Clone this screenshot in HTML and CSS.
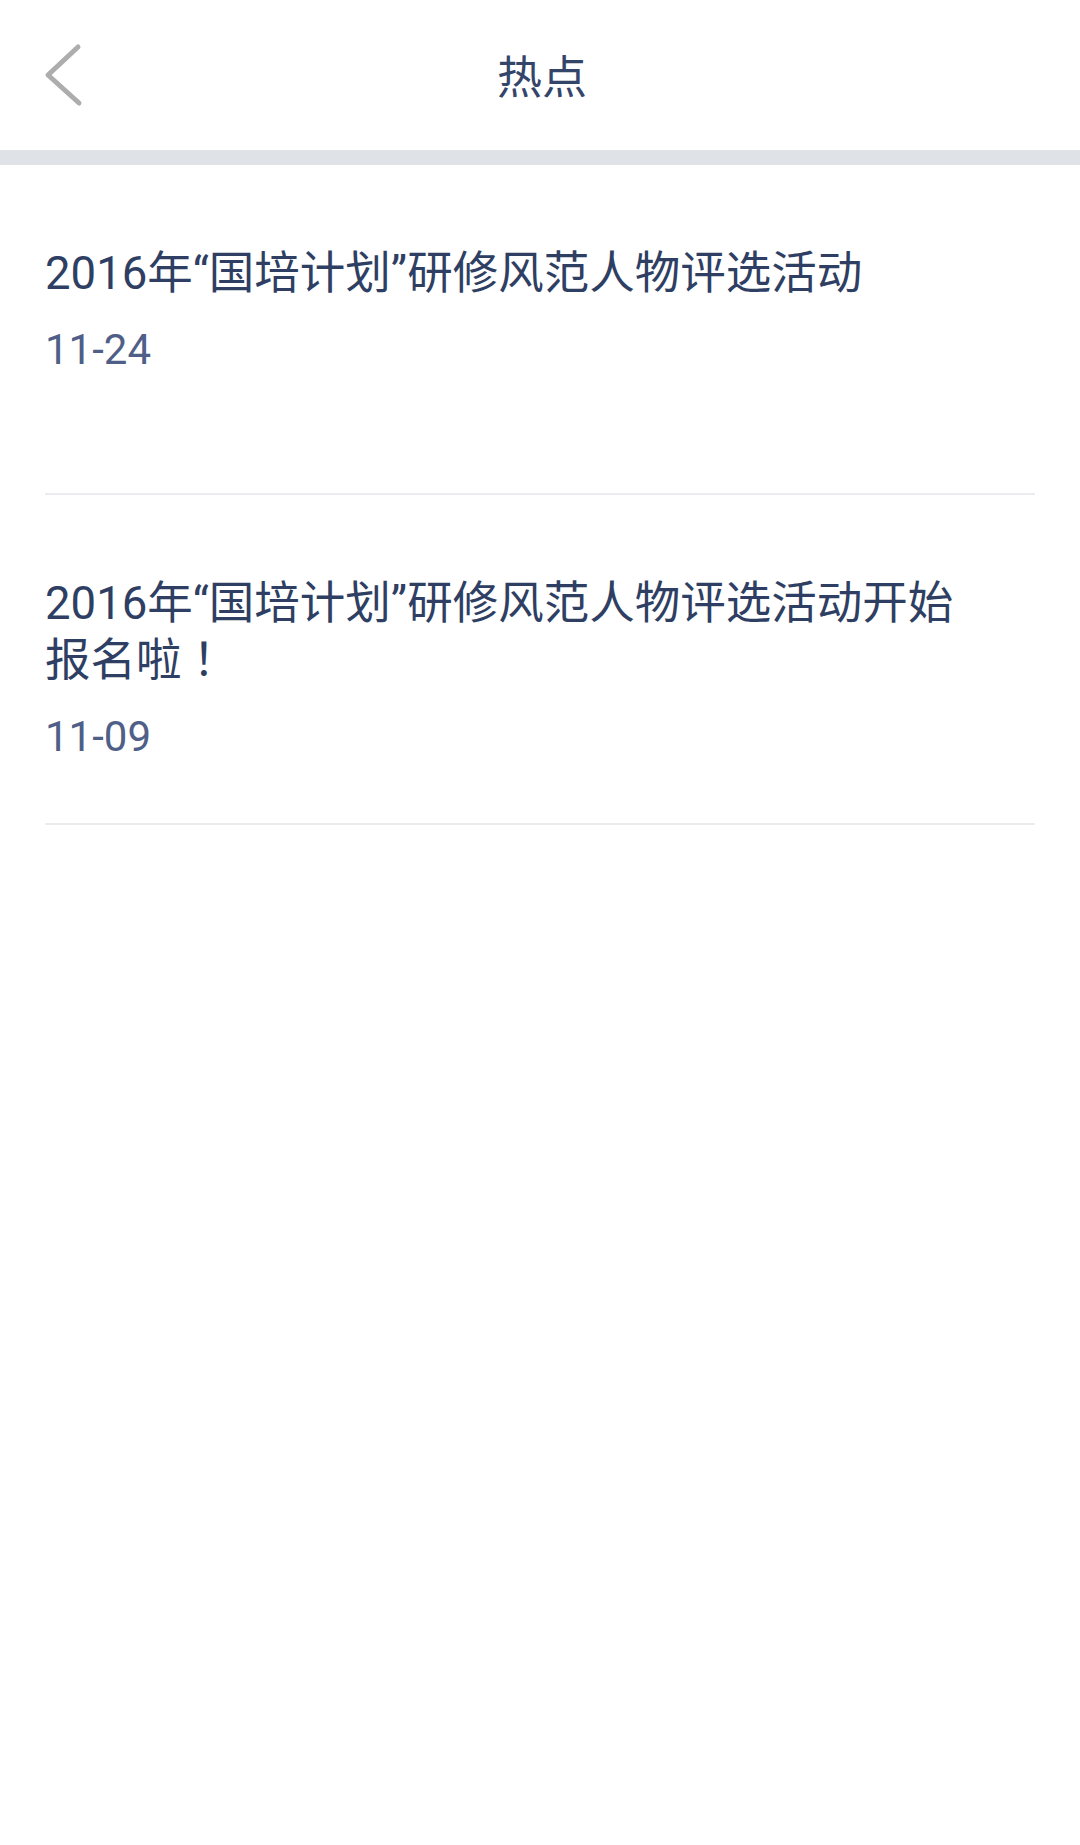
FILE: index.html
```html
<!DOCTYPE html>
<html lang="zh-CN">
<head>
<meta charset="utf-8">
<title>热点</title>
<link rel="stylesheet" href="styles.css">
</head>
<body>
<header class="topbar">
  <div class="topbar-left">
    <svg class="back-icon" width="40" height="70" viewBox="0 0 40 70" aria-hidden="true">
      <polyline points="34,7 4,35 35,63" fill="none" stroke="#adadad" stroke-width="5" stroke-linecap="round" stroke-linejoin="round"/>
    </svg>
  </div>
  <h1 class="topbar-title">热点</h1>
  <div class="topbar-right"></div>
</header>
<div class="divider-band"></div>
<ul class="news-list">
  <li class="news-item">
    <p class="news-title">2016年“国培计划”研修风范人物评选活动</p>
    <p class="news-date">11-24</p>
  </li>
  <li class="news-item">
    <p class="news-title">2016年“国培计划”研修风范人物评选活动开始报名啦<span class="cjk-punct">！</span></p>
    <p class="news-date">11-09</p>
  </li>
</ul>
</body>
</html>
```
FILE: styles.css
```css
html, body {
  margin: 0;
  padding: 0;
  background: #ffffff;
}
body {
  width: 1080px;
  min-height: 1845px;
  font-family: Roboto, "Noto Sans CJK SC", sans-serif;
}
.topbar {
  height: 150px;
  display: grid;
  grid-template-columns: 1fr auto 1fr;
  align-items: center;
  background: #ffffff;
}
.topbar-left {
  display: flex;
  align-items: center;
  padding-left: 44px;
  height: 150px;
}
.back-icon {
  display: block;
}
.topbar-title {
  margin: 0;
  padding-left: 4px;
  font-family: "Noto Sans CJK SC", sans-serif;
  font-weight: 400;
  font-size: 45px;
  line-height: 150px;
  color: #34456a;
}
.divider-band {
  height: 15px;
  background: #dfe2e6;
}
.news-list {
  list-style: none;
  margin: 0;
  padding: 0 45px;
}
.news-item {
  box-sizing: border-box;
  min-height: 330px;
  padding: 80px 0 60px;
  border-bottom: 2px solid #ebecf0;
}
.news-title {
  margin: 0;
  padding-right: 60px;
  font-size: 45.5px;
  line-height: 57px;
  color: #2f3f63;
}
.cjk-punct {
  display: inline-block;
  padding-left: 11px;
  line-height: 1;
}
.news-date {
  margin: 23px 0 0;
  font-size: 42px;
  line-height: 50px;
  color: #4f5f88;
}
```
